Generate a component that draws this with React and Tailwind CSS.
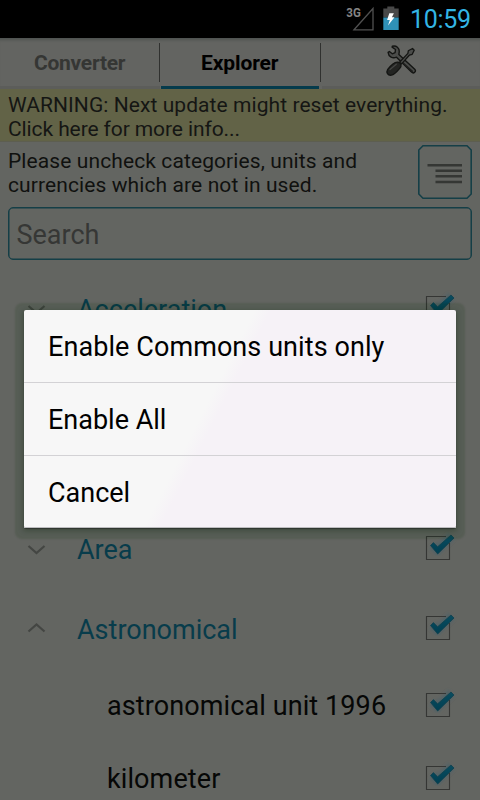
import React from 'react';

function StatusBar() {
  return (
    <header className="flex h-[38px] shrink-0 items-start justify-end bg-black pr-[10px] text-[#33b5e5]">
      <svg className="h-[38px] w-[66px]" viewBox="344 0 66 38">
        <text x="346.3" y="17" fontSize="13.5" fontWeight="700" fill="#858585" textLength="14.5" lengthAdjust="spacingAndGlyphs">3G</text>
        <path d="M354 29.8 373 8.5V29.8Z" fill="none" stroke="#505050" strokeWidth="1.3" />
        <path d="M383.3 17.5V8.5h4V6.4h7v2.1h4.4v9Z" fill="#484848" />
        <path d="M383.3 17.5h15.4V30h-15.4Z" fill="#2f91b7" />
        <path d="M389.3 13.3h4.6l-2 4h2.6l-6.5 8.2 1.8-5.4h-2.7Z" fill="#fff" />
      </svg>
      <span className="h-[38px] w-[60px] whitespace-nowrap text-[25px] leading-[40px] tracking-[-0.3px]">10:59</span>
    </header>
  );
}

function Tools() {
  return (
    <svg className="h-[34px] w-[34px]" viewBox="384 45 34 34" strokeLinecap="round" strokeLinejoin="round">
      <path d="M392.3 46.3c4-1 7.3 1.6 6.9 5.8l-.3 2.3 15.8 14.8c2 2.2-1 5-3.2 2.9L396.5 57.2c-3.7 1.6-7.9-.1-8.4-4.8l1.3-.9 2.9 2.3 2.8-1.2.4-3.1-3.4-2.3Z" fill="#4b4c4a" stroke="#141513" strokeWidth="1.4" />
      <path d="m400.5 60.5 12 10.8" stroke="#20211f" strokeWidth="1.2" />
      <path d="m399.8 62 8.1-8.6.4-2.6 4.2-2.3 1.7 1.7-2 4.1-2.9.9-7.7 8.7Z" fill="#4b4c4a" stroke="#141513" strokeWidth="1.3" />
      <path d="M387.7 69.4c2.4-3.2 6.6-8 10.3-7.3 3.5.8 3.9 3.8 1.7 6.3-2.4 2.9-5.3 6.3-8.4 6.800-3.6.4-5.4-2.8-3.6-5.8Z" fill="#232422" stroke="#141513" strokeWidth="1.3" />
      <path d="m390 69.5 6.3-5.3" stroke="#454644" strokeWidth="1.2" />
    </svg>
  );
}

function Tabs() {
  return (
    <nav className="flex h-[51px] shrink-0 bg-[#636461] pt-[5px] text-[21px] font-bold leading-[40px] shadow-[inset_0_4px_3px_-2px_#4e5250]">
      <div className="flex w-[160px] flex-col">
        <div className="h-[39px] border-r border-[#30312f] pl-[34px] text-[#353634]"><span className="tracking-[-0.25px]">Converter</span></div>
        <div className="mt-[4px] h-[3px] bg-[#5c5d5a]" />
      </div>
      <div className="flex w-[161px] flex-col">
        <div className="h-[39px] border-r border-[#30312f] pl-[41px] text-black"><span className="tracking-[-0.1px]">Explorer</span></div>
        <div className="ml-px mr-[2px] mt-[4px] h-[3px] bg-[#053b4c]" />
      </div>
      <div className="flex flex-1 flex-col">
        <div className="flex h-[39px] justify-center pt-[2px]"><Tools /></div>
        <div className="ml-px mt-[4px] h-[3px] bg-[#5c5d5a]" />
      </div>
    </nav>
  );
}

function Check() {
  return (
    <svg className="h-[36px] w-[40px]" viewBox="0 0 40 36">
      <defs>
        <filter id="glow" x="-40%" y="-40%" width="180%" height="180%"><feGaussianBlur stdDeviation="1.8" /></filter>
        <linearGradient id="tick" x1="0" y1="0" x2="0" y2="1"><stop offset="0" stopColor="#0a4c5f" /><stop offset="1" stopColor="#003f52" /></linearGradient>
      </defs>
      <path d="m12.5 15 5 5 14-14" fill="none" stroke="#4a6068" strokeOpacity=".7" strokeWidth="9" filter="url(#glow)" />
      <path d="M26 6.5H6.5v23h23V13" fill="none" stroke="#353634" strokeWidth="1.1" />
      <path d="m10.5 15.5 2.9-2.9 4.2 4.2L31 5l3 3L17.7 24Z" fill="url(#tick)" stroke="#12404d" strokeWidth=".8" />
    </svg>
  );
}

function Category({ name, open }) {
  return (
    <div className="flex h-[80px] shrink-0 items-center pr-[20px] text-[#083c4b]">
      <svg className="mr-[29px] ml-[24px] h-[20px] w-[24px]" viewBox="0 0 24 20" fill="none" stroke="#444643" strokeWidth="2.2">
        <path d={open ? 'm4.5 12.5 8-7 8 7' : 'm4.5 7 8 7 8-7'} />
      </svg>
      <span className="flex-1 pt-[2px] text-[27px] leading-[36px]">{name}</span>
      <div className="pb-[2px]"><Check /></div>
    </div>
  );
}

function Unit({ name }) {
  return (
    <div className="flex h-[73px] shrink-0 items-center pl-[107px] pr-[20px] text-[#060706]">
      <span className="flex-1 whitespace-nowrap text-[27px] leading-[36px] tracking-[0.1px]">{name}</span>
      <div className="pb-px"><Check /></div>
    </div>
  );
}

export default function App() {
  return (
    <div className="relative flex h-[800px] w-[480px] flex-col overflow-hidden bg-[#636561] font-['Roboto',sans-serif]">
      <StatusBar />
      <Tabs />
      <div className="h-[53px] shrink-0 whitespace-nowrap border-b border-[#5d5e50] bg-[#626347] pl-[8px] pt-[4px] text-[21px] leading-[24px] text-[#151614]">
        <p className="tracking-[0.07px]">WARNING: Next update might reset everything.</p>
        <p className="tracking-[-0.1px]">Click here for more info...</p>
      </div>
      <div className="flex h-[65px] shrink-0 justify-between pl-[8px] pr-[8px] pt-[3px]">
        <div className="whitespace-nowrap pt-[4px] text-[21px] leading-[24px] tracking-[0.1px] text-[#10110f]">
          <p>Please uncheck categories, units and</p>
          <p>currencies which are not in used.</p>
        </div>
        <svg className="h-[54px] w-[54px]" viewBox="0 0 54 54" fill="none">
          <path d="M5 .8h44l4.2 4.2v44L49 53.2H5L.8 49V5Z" stroke="#153f47" strokeWidth="1.6" />
          <path d="M9.5 20.2H44M17.5 25.8H44M17.5 31.3H44M17.5 36.9H44" stroke="#353734" strokeWidth="2.5" />
        </svg>
      </div>
      <div className="mx-[8px] h-[53px] shrink-0 rounded-[5px] border border-[#153f47] pl-[7.5px] text-[27px] leading-[54px] text-[#363735] shadow-[inset_0_0_0_0.5px_#153f47]">Search</div>
      <main className="mt-[9px] flex flex-col">
        <Category name="Acceleration" />
        <div className="h-[160px] shrink-0" />
        <Category name="Area" />
        <Category name="Astronomical" open />
        <Unit name="astronomical unit 1996" />
        <Unit name="kilometer" />
      </main>
      <div role="dialog" className="absolute left-[24px] top-[310px] w-[432px] rounded-[2px] bg-[linear-gradient(117deg,#f7f7f7_0%,#f7f7f7_42.5%,#f6f2f7_45.5%,#f6f2f7_100%)] text-[27px] leading-[74px] text-black shadow-[0_1px_1px_#0005,0_2px_5px_1px_#0a200844,0_2px_2px_9px_#0a300a22]">
        <div className="h-[73px] border-b border-[#d3d2d5] pl-[24px] tracking-[0.08px]">Enable Commons units only</div>
        <div className="h-[73px] border-b border-[#d3d2d5] pl-[24px]">Enable All</div>
        <div className="h-[72px] border-b border-[#bdbdbf] pl-[24px]">Cancel</div>
      </div>
    </div>
  );
}
